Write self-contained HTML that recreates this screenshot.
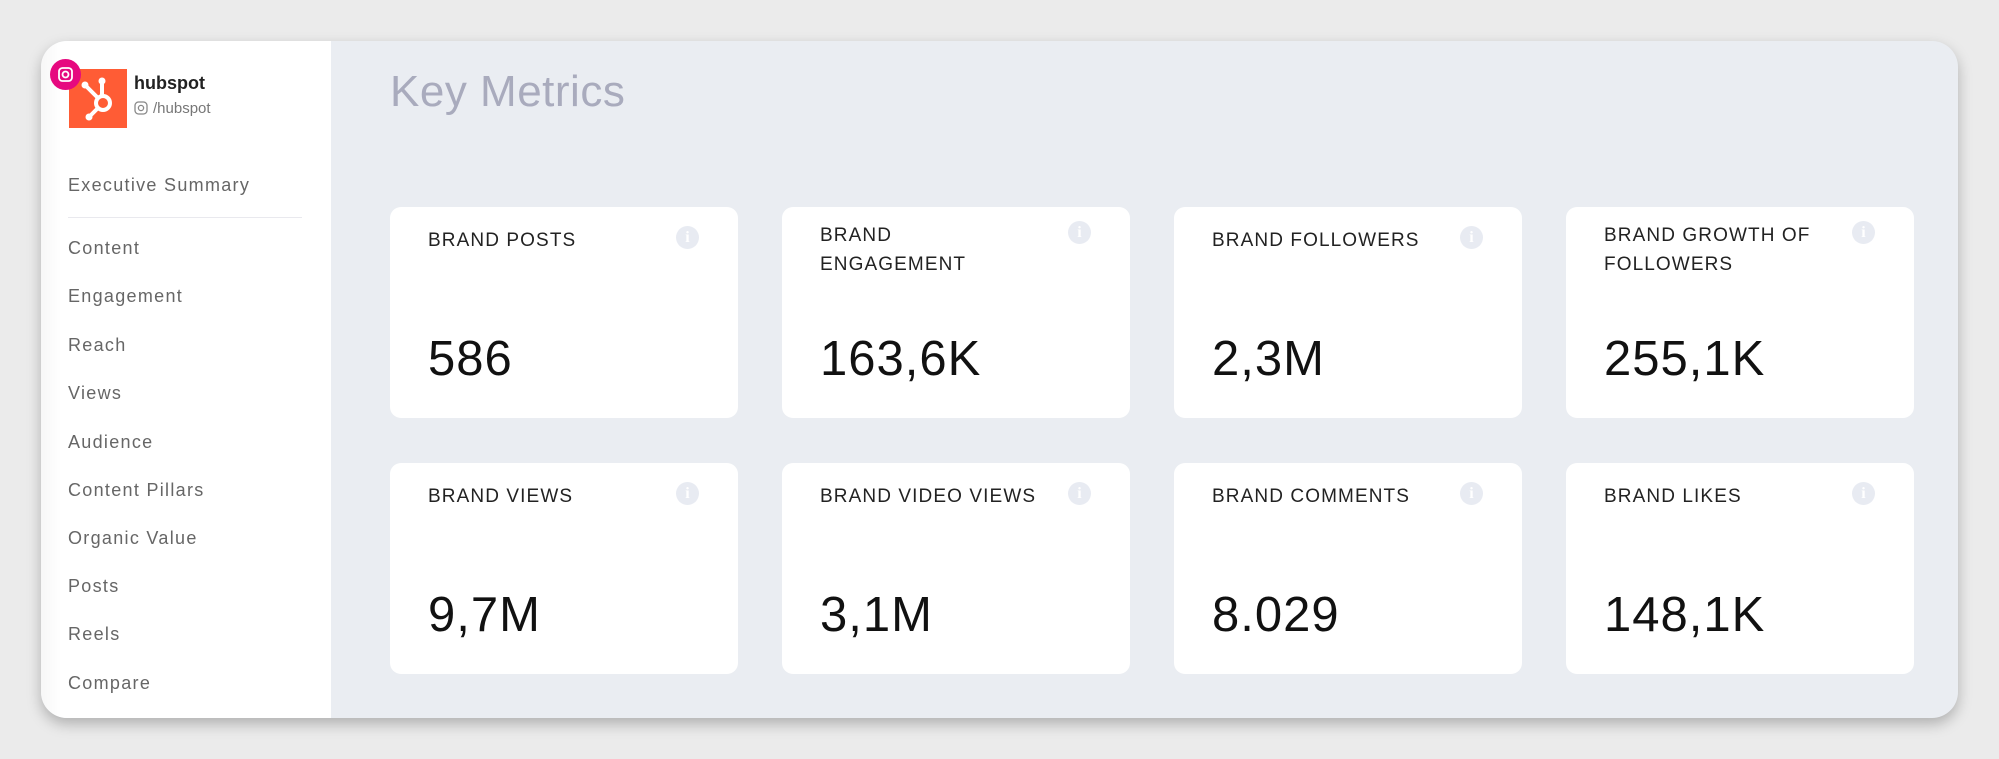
<!DOCTYPE html>
<html><head><meta charset="utf-8"><style>
*{margin:0;padding:0;box-sizing:border-box}
body{width:1999px;height:759px;background:#ebebeb;font-family:"Liberation Sans",sans-serif;position:relative;overflow:hidden}
.app{position:absolute;left:41px;top:41px;width:1917px;height:677px;border-radius:26px;background:#eaedf2;overflow:hidden;box-shadow:0 6px 14px rgba(0,0,0,.25)}
.side{position:absolute;left:0;top:0;width:290px;height:677px;background:linear-gradient(90deg,#f7f7f7,#fff 20px)}
.logo{position:absolute;left:28px;top:28px;width:58px;height:59px;background:#ff5c35}
.pink{position:absolute;left:9px;top:18px;width:31px;height:31px;border-radius:50%;background:#e6097f}
.name{position:absolute;left:93px;top:32px;font-size:18px;font-weight:bold;color:#222}
.handle{position:absolute;left:93px;top:59px;font-size:15px;color:#777}
.nav{position:absolute;left:27px;font-size:18px;color:#666;letter-spacing:1.3px}
.div{position:absolute;left:27px;top:176px;width:234px;height:1px;background:#e9e9ee}
h1{position:absolute;left:349px;top:26px;font-size:44px;font-weight:normal;color:#a9abbd;letter-spacing:.5px}
.c{position:absolute;width:348px;height:211px;background:#fff;border-radius:11px}
.l{position:absolute;left:38px;top:20px;font-size:19px;color:#222;line-height:29px;letter-spacing:1.1px;width:280px}
.v{position:absolute;left:38px;top:124px;font-size:49px;color:#111;letter-spacing:1px}
.i{position:absolute;left:286px;top:19px;width:23px;height:23px;border-radius:50%;background:#e8ebf2;color:#fff;font-weight:bold;font-size:16px;text-align:center;line-height:23px;font-family:"Liberation Serif",serif}
</style></head><body>
<div class="app">
<div class="side">
<div class="logo"><svg width="58" height="59" viewBox="0 0 58 59"><g stroke="#fff" stroke-width="4" fill="none" stroke-linecap="round"><circle cx="34" cy="34" r="7"/><path d="M16 16 L29 29 M33 27 V13 M29 39 L20 48"/></g><circle cx="16" cy="16" r="3.5" fill="#fff"/><circle cx="33" cy="12" r="3.5" fill="#fff"/><circle cx="20" cy="48" r="3.5" fill="#fff"/></svg></div>
<div class="pink"><svg width="31" height="31" viewBox="0 0 31 31"><rect x="9" y="9" width="13" height="13" rx="3.5" fill="none" stroke="#fff" stroke-width="1.8"/><circle cx="15.5" cy="15.5" r="3" fill="none" stroke="#fff" stroke-width="1.8"/></svg></div>
<div class="name">hubspot</div>
<div class="handle"><svg width="14" height="14" viewBox="0 0 14 14" style="vertical-align:-2px;margin-right:5px"><rect x="1" y="1" width="12" height="12" rx="3.5" fill="none" stroke="#888" stroke-width="1.3"/><circle cx="7" cy="7" r="2.6" fill="none" stroke="#888" stroke-width="1.3"/></svg>/hubspot</div>
<div class="nav" style="top:134px">Executive Summary</div>
<div class="div"></div>
<div class="nav" style="top:197px">Content</div>
<div class="nav" style="top:245px">Engagement</div>
<div class="nav" style="top:294px">Reach</div>
<div class="nav" style="top:342px">Views</div>
<div class="nav" style="top:391px">Audience</div>
<div class="nav" style="top:439px">Content Pillars</div>
<div class="nav" style="top:487px">Organic Value</div>
<div class="nav" style="top:535px">Posts</div>
<div class="nav" style="top:583px">Reels</div>
<div class="nav" style="top:632px">Compare</div>
</div>
<h1>Key Metrics</h1>
<div class="c" style="left:349px;top:166px"><div class="l" style="top:19px">BRAND POSTS</div><div class="i">i</div><div class="v">586</div></div>
<div class="c" style="left:741px;top:166px"><div class="l" style="top:14px">BRAND<br>ENGAGEMENT</div><div class="i" style="top:14px">i</div><div class="v">163,6K</div></div>
<div class="c" style="left:1133px;top:166px"><div class="l" style="top:19px">BRAND FOLLOWERS</div><div class="i">i</div><div class="v">2,3M</div></div>
<div class="c" style="left:1525px;top:166px"><div class="l" style="top:14px">BRAND GROWTH OF<br>FOLLOWERS</div><div class="i" style="top:14px">i</div><div class="v">255,1K</div></div>
<div class="c" style="left:349px;top:422px"><div class="l" style="top:19px">BRAND VIEWS</div><div class="i">i</div><div class="v">9,7M</div></div>
<div class="c" style="left:741px;top:422px"><div class="l" style="top:19px">BRAND VIDEO VIEWS</div><div class="i">i</div><div class="v">3,1M</div></div>
<div class="c" style="left:1133px;top:422px"><div class="l" style="top:19px">BRAND COMMENTS</div><div class="i">i</div><div class="v">8.029</div></div>
<div class="c" style="left:1525px;top:422px"><div class="l" style="top:19px">BRAND LIKES</div><div class="i">i</div><div class="v">148,1K</div></div>
</div>
</body></html>
